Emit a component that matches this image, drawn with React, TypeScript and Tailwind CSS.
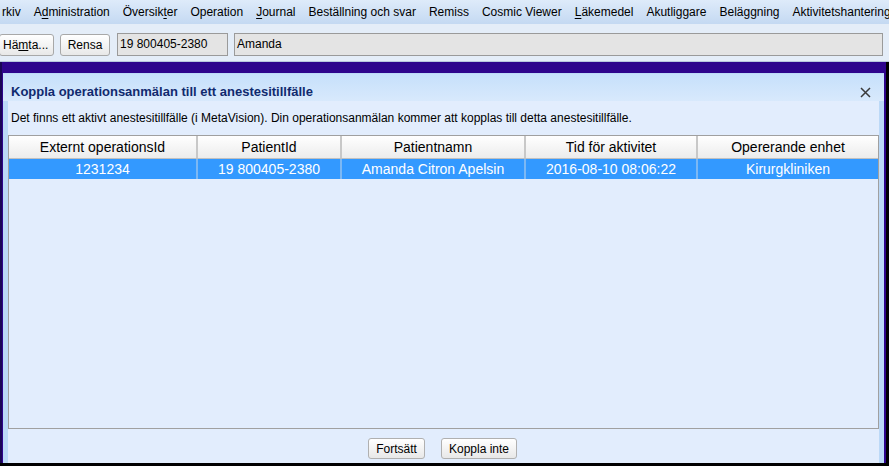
import React from 'react';

const menu = [
  { label: 'rkiv', key: '' },
  { label: 'Administration', key: 'd' },
  { label: 'Översikter', key: 't' },
  { label: 'Operation', key: '' },
  { label: 'Journal', key: 'J' },
  { label: 'Beställning och svar', key: '' },
  { label: 'Remiss', key: '' },
  { label: 'Cosmic Viewer', key: '' },
  { label: 'Läkemedel', key: 'L' },
  { label: 'Akutliggare', key: '' },
  { label: 'Beläggning', key: '' },
  { label: 'Aktivitetshantering', key: '' },
];

const columns = [
  { title: 'Externt operationsId', w: 'w-[189px]' },
  { title: 'PatientId', w: 'w-[144px]' },
  { title: 'Patientnamn', w: 'w-[184px]' },
  { title: 'Tid för aktivitet', w: 'w-[172px]' },
  { title: 'Opererande enhet', w: 'flex-1' },
];

const row = ['1231234', '19 800405-2380', 'Amanda Citron Apelsin', '2016-08-10 08:06:22', 'Kirurgkliniken'];

function MenuLabel({ label, k }: { label: string; k: string }) {
  if (!k) return <>{label}</>;
  const i = label.indexOf(k);
  return (
    <>
      {label.slice(0, i)}
      <span className="underline underline-offset-2">{label[i]}</span>
      {label.slice(i + 1)}
    </>
  );
}

export default function App() {
  return (
    <div className="w-[889px] h-[466px] flex flex-col bg-black overflow-hidden text-black" style={{ fontFamily: '"Liberation Sans", Arial, sans-serif' }}>
      {/* menu */}
      <div className="h-[24px] flex items-center gap-[13px] pl-[2px] bg-gradient-to-b from-[#deebfa] to-[#c4d9f2] text-[12px] whitespace-nowrap overflow-hidden">
        {menu.map((m) => (
          <span key={m.label} className="shrink-0">
            <MenuLabel label={m.label} k={m.key} />
          </span>
        ))}
      </div>

      {/* toolbar */}
      <div className="h-[38px] flex items-center gap-[6px] pt-[4px] bg-[#e4edf8] border-b border-[#b8c8dc] text-[12px]">
        <button className="h-[22px] w-[55px] -ml-[1px] rounded-[3px] border border-[#a8a8a8] bg-gradient-to-b from-white to-[#e8e8e8] text-left pl-[3px]">
          Hä<span className="underline">m</span>ta...
        </button>
        <button className="h-[22px] w-[50px] rounded-[3px] border border-[#a8a8a8] bg-gradient-to-b from-white to-[#e8e8e8]">Rensa</button>
        <div className="h-[23px] w-[111px] ml-[1px] border border-[#9a9a9a] bg-[#e4e4e4] pl-[2px] leading-[21px]">19 800405-2380</div>
        <div className="h-[23px] w-[649px] border border-[#9a9a9a] bg-[#e4e4e4] pl-[2px] leading-[21px]">Amanda</div>
      </div>

      {/* desktop area */}
      <div className="flex-1 flex pr-[3px] pb-[3px]">
        <div className="flex-1 flex flex-col bg-[#2e058c] border-l-[2px] border-[#1a0655] pt-[11px] pr-[2px] pl-[1px]">
          <div className="flex-1 flex flex-col bg-[#bcd9f7] px-[5px] pt-[1px]">
            {/* title bar */}
            <div className="h-[27px] -mx-[5px] px-[8px] pt-[9px] flex items-center justify-between bg-gradient-to-b from-[#c6e0fb] to-[#d8e9fc]">
              <span className="font-bold text-[13px] text-[#102a6e]">Koppla operationsanmälan till ett anestesitillfälle</span>
              <svg width="13" height="13" viewBox="0 0 13 13" className="mr-[4px]">
                <path d="M2 2 L11 11 M11 2 L2 11" stroke="#3a3a3a" strokeWidth="1.5" />
              </svg>
            </div>
            {/* body */}
            <div className="flex-1 flex flex-col bg-[#e2edfd]">
              <div className="h-[34px] flex items-center pl-[3px] text-[12px]">
                Det finns ett aktivt anestesitillfälle (i MetaVision). Din operationsanmälan kommer att kopplas till detta anestesitillfälle.
              </div>
              <div className="flex-1 flex flex-col border border-[#a0a0a0] bg-[#e2edfd] text-[14px]">
                <div className="h-[23px] flex bg-gradient-to-b from-white to-[#ececec] border-b border-[#c0c0c0]">
                  {columns.map((c, i) => (
                    <div key={c.title} className={`${c.w} flex items-center justify-center ${i < columns.length - 1 ? 'border-r-2 border-[#c8c8c8]' : ''}`}>
                      {c.title}
                    </div>
                  ))}
                </div>
                <div className="h-[20px] flex bg-[#3399ff] text-white">
                  {row.map((v, i) => (
                    <div key={i} className={`${columns[i].w} flex items-center justify-center ${i < row.length - 1 ? 'border-r-2 border-[#7cb8f4]' : ''}`}>
                      {v}
                    </div>
                  ))}
                </div>
              </div>
              <div className="h-[34px] flex items-start justify-center gap-[16px] pt-[9px] pr-[2px] text-[12px]">
                <button className="h-[21px] w-[57px] rounded-[3px] border border-[#b0b0b0] bg-gradient-to-b from-white to-[#e8e8e8]">Fortsätt</button>
                <button className="h-[21px] w-[76px] rounded-[3px] border border-[#b0b0b0] bg-gradient-to-b from-white to-[#e8e8e8]">Koppla inte</button>
              </div>
            </div>
          </div>
        </div>
      </div>
    </div>
  );
}
